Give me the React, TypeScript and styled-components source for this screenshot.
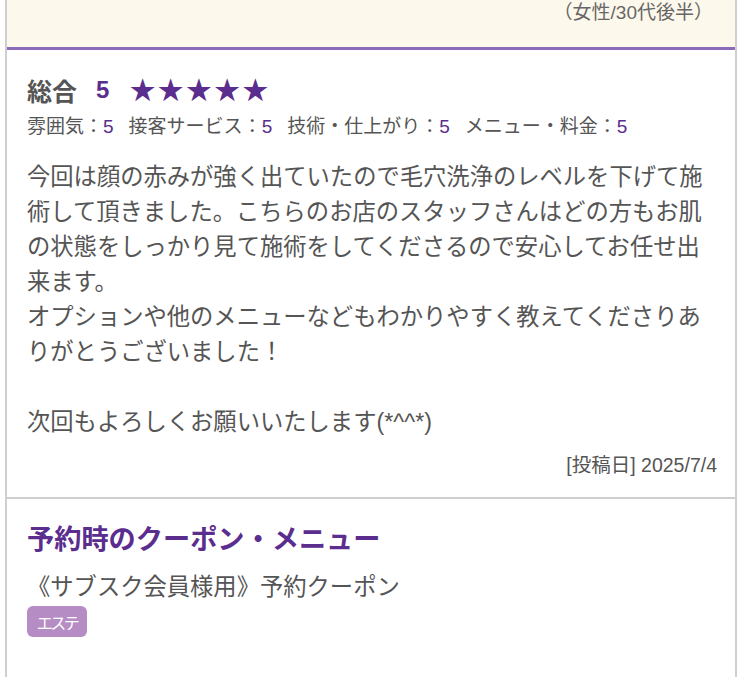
import React from 'react';
import styled, { createGlobalStyle } from 'styled-components';

const GlobalStyle = createGlobalStyle`
  body {
    margin: 0;
    background: #fff;
    font-family: "Liberation Sans", "Noto Sans CJK JP", sans-serif;
    color: #555;
  }
`;

const Frame = styled.div`
  margin-left: 5px;
  width: 732px;
  min-height: 677px;
  box-sizing: border-box;
  border-left: 2px solid #cfcfcf;
  border-right: 2px solid #cfcfcf;
  background: #fff;
`;

const ReviewerBar = styled.div`
  background: #fdf8ec;
  border-bottom: 3px solid #8c6bbb;
  height: 47px;
  display: flex;
  justify-content: flex-end;
  align-items: flex-start;
  padding-right: 22px;
`;

const ReviewerText = styled.span`
  font-size: 19px;
  line-height: 26px;
  color: #666;
`;

const Review = styled.section`
  padding: 24px 22px 20px 20px;
  border-bottom: 2px solid #cfcfcf;
`;

const TotalRow = styled.div`
  display: flex;
  align-items: center;
  height: 32px;
`;

const TotalLabel = styled.span`
  font-size: 25px;
  font-weight: bold;
  color: #555;
`;

const TotalScore = styled.span`
  font-size: 24px;
  font-weight: bold;
  color: #5b2d8e;
  margin-left: 19px;
`;

const Stars = styled.span`
  margin-left: 19px;
  font-size: 31.5px;
  line-height: 32px;
  color: #5b2d8e;
  font-family: "DejaVu Sans", sans-serif;
`;

const SubRatings = styled.div`
  display: flex;
  gap: 15px;
  margin-top: 8px;
  font-size: 19px;
  line-height: 26px;
`;

const SubItem = styled.span`
  color: #555;
`;

const Num = styled.span`
  color: #5b2d8e;
`;

const Body = styled.p`
  margin: 20px 0 0;
  font-size: 23.3px;
  line-height: 35px;
  color: #555;
  white-space: pre-wrap;
`;

const PostDate = styled.div`
  margin-top: 13px;
  margin-right: -4px;
  text-align: right;
  font-size: 19.5px;
  line-height: 24px;
  color: #555;
`;

const Coupon = styled.section`
  padding: 22px 20px;
`;

const CouponTitle = styled.h2`
  margin: 0;
  font-size: 27.2px;
  line-height: 38px;
  font-weight: bold;
  color: #5b2d8e;
`;

const CouponName = styled.div`
  margin-top: 12px;
  font-size: 23.3px;
  line-height: 32px;
  color: #555;
`;

const Tag = styled.div`
  display: flex;
  align-items: center;
  justify-content: center;
  margin-top: 3px;
  width: 60px;
  height: 31px;
  border-radius: 6px;
  background: #b58dc4;
  color: #fff;
  font-size: 16px;
  letter-spacing: -2.5px;
`;

const ratings = [
  { label: '雰囲気', score: 5 },
  { label: '接客サービス', score: 5 },
  { label: '技術・仕上がり', score: 5 },
  { label: 'メニュー・料金', score: 5 },
];

const bodyText = `今回は顔の赤みが強く出ていたので毛穴洗浄のレベルを下げて施術して頂きました。こちらのお店のスタッフさんはどの方もお肌の状態をしっかり見て施術をしてくださるので安心してお任せ出来ます。
オプションや他のメニューなどもわかりやすく教えてくださりありがとうございました！

次回もよろしくお願いいたします(*^^*)`;

export default function App() {
  return (
    <>
      <GlobalStyle />
      <Frame>
        <ReviewerBar>
          <ReviewerText>（女性/30代後半）</ReviewerText>
        </ReviewerBar>
        <Review>
          <TotalRow>
            <TotalLabel>総合</TotalLabel>
            <TotalScore>5</TotalScore>
            <Stars>★★★★★</Stars>
          </TotalRow>
          <SubRatings>
            {ratings.map(r => (
              <SubItem key={r.label}>
                {r.label}：<Num>{r.score}</Num>
              </SubItem>
            ))}
          </SubRatings>
          <Body>{bodyText}</Body>
          <PostDate>[投稿日] 2025/7/4</PostDate>
        </Review>
        <Coupon>
          <CouponTitle>予約時のクーポン・メニュー</CouponTitle>
          <CouponName>《サブスク会員様用》予約クーポン</CouponName>
          <Tag>エステ</Tag>
        </Coupon>
      </Frame>
    </>
  );
}
